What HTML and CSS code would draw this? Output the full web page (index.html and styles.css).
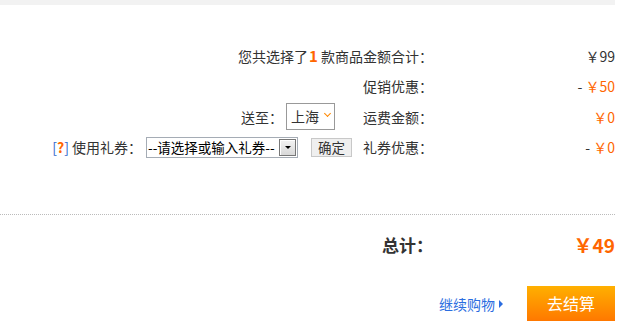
FILE: index.html
```html
<!DOCTYPE html>
<html lang="zh-CN">
<head>
    <meta charset="UTF-8">
    <title>购物车结算</title>
    <link rel="stylesheet" href="styles.css">
</head>
<body>
    <div class="cart">
        <div class="top-bar"></div>

        <div class="summary">
            <div class="row">
                <div class="label">您共选择了<b class="count">1</b>&nbsp;款商品金额合计：</div>
                <div class="value">￥99</div>
            </div>
            <div class="row">
                <div class="label">促销优惠：</div>
                <div class="value">- <span class="orange">￥50</span></div>
            </div>
            <div class="row">
                <div class="extra extra-ship">
                    <span>送至：</span>
                    <span class="city">上海<span class="chev"></span></span>
                </div>
                <div class="label">运费金额：</div>
                <div class="value"><span class="orange">￥0</span></div>
            </div>
            <div class="row">
                <div class="extra extra-coupon">
                    <span><span class="help">[<b>?</b>]</span> 使用礼券：</span>
                    <span class="combo">
                        <span class="combo-text">--请选择或输入礼券--</span>
                        <span class="combo-btn"><i></i></span>
                    </span>
                    <span class="btn-ok">确定</span>
                </div>
                <div class="label">礼券优惠：</div>
                <div class="value">- <span class="orange">￥0</span></div>
            </div>
        </div>

        <div class="total">
            <div class="total-label">总计：</div>
            <div class="total-value">￥49</div>
        </div>

        <div class="actions">
            <a class="go-on" href="#">继续购物<span class="tri"></span></a>
            <a class="checkout" href="#">去结算</a>
        </div>
    </div>
</body>
</html>
```

FILE: styles.css
```css
body {
    margin: 0;
    padding: 0;
    background: #fff;
    font-family: "Noto Sans CJK SC", "Liberation Sans", sans-serif;
    font-size: 14px;
    color: #333;
    text-spacing-trim: space-all;
}

.cart {
    width: 615px;
}

.top-bar {
    height: 5px;
    background-color: #f2f2f2;
}

.summary {
    padding-top: 36px;
    padding-bottom: 52px;
    border-bottom: 1px dotted #bbb;
}

.row {
    display: flex;
    justify-content: flex-end;
    align-items: center;
    height: 30px;
    line-height: 30px;
}
.row:nth-child(3) { height: 31px; }

.label {
    text-align: right;
}

.count {
    color: #ff6600;
    font-size: 15px;
    margin-left: 1px;
}

.value {
    width: 182px;
    text-align: right;
}

.orange {
    color: #ff6600;
}

.extra {
    display: flex;
    align-items: center;
}
.extra-ship { margin-right: 28px; }
.extra-coupon { margin-right: 11px; }

.city {
    display: inline-flex;
    align-items: center;
    height: 25px;
    line-height: 25px;
    padding: 0 4px;
    margin-left: 3px;
    border: 1px solid #999;
    color: #333;
}
.chev {
    width: 4px;
    height: 4px;
    margin-left: 6px;
    margin-top: -7px;
    border-right: 1.5px solid #ff8800;
    border-bottom: 1.5px solid #ff8800;
    transform: rotate(45deg);
}

.help {
    color: #36c;
}
.help b {
    color: #ff6600;
}

.combo {
    display: inline-flex;
    align-items: center;
    width: 150px;
    height: 19px;
    margin-left: 4px;
    border: 1px solid #a5acb5;
    background: #fff;
    line-height: 19px;
}
.combo-text {
    flex: 1;
    padding-left: 1px;
    color: #000;
    font-size: 13.5px;
    white-space: nowrap;
    overflow: hidden;
}
.combo-btn {
    display: flex;
    justify-content: center;
    align-items: center;
    width: 15px;
    height: 15px;
    margin-right: 1px;
    border: 1px solid #777;
    background: linear-gradient(#f4f4f4, #d8d8d8);
    box-shadow: inset 1px 1px 0 #fff;
}
.combo-btn i {
    width: 0;
    height: 0;
    border-left: 3px solid transparent;
    border-right: 3px solid transparent;
    border-top: 3px solid #000;
}

.btn-ok {
    display: inline-block;
    height: 17px;
    line-height: 17px;
    padding: 0 6px;
    margin-left: 13px;
    border: 1px solid #c8c8c8;
    background-color: #efefef;
    color: #333;
    font-size: 13.5px;
}

.total {
    display: flex;
    justify-content: flex-end;
    align-items: center;
    height: 30px;
    margin-top: 14px;
    font-weight: bold;
}
.total-label {
    font-size: 17px;
}
.total-value {
    width: 182px;
    text-align: right;
    color: #ff6600;
    font-size: 19px;
}

.actions {
    display: flex;
    justify-content: flex-end;
    align-items: center;
    margin-top: 27px;
}

.go-on {
    display: flex;
    align-items: center;
    color: #2b6de0;
    text-decoration: none;
    margin-right: 24px;
}
.tri {
    width: 0;
    height: 0;
    margin-left: 4px;
    border-top: 4px solid transparent;
    border-bottom: 4px solid transparent;
    border-left: 4px solid #2b6de0;
}

.checkout {
    display: block;
    width: 88px;
    height: 35px;
    line-height: 35px;
    text-align: center;
    color: #fff;
    font-size: 16px;
    text-decoration: none;
    background: linear-gradient(#ffb000, #ff7800);
    box-shadow: 0 2px 0 #ddd;
}
```
